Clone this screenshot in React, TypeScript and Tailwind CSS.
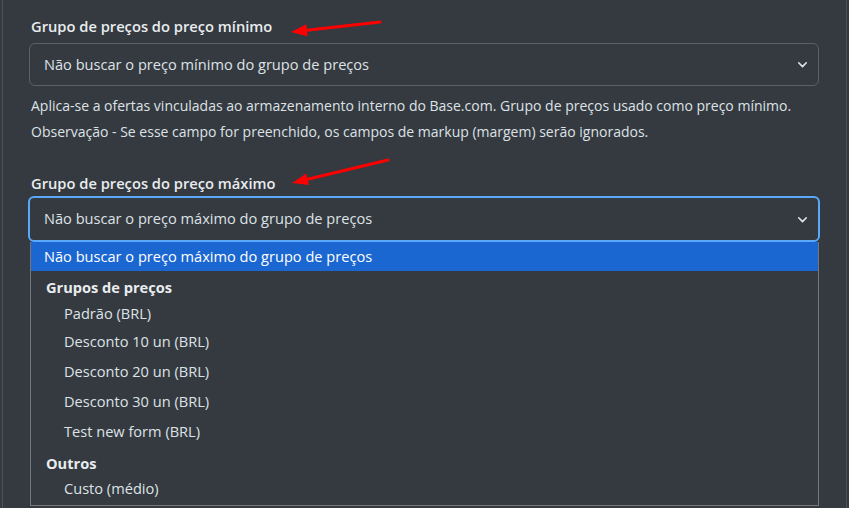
const font = { fontFamily: '"Open Sans", "Noto Sans", sans-serif' };

const groups = [
  {
    title: "Grupos de preços",
    items: [
      ["Padrão (BRL)", "h-[26px]"],
      ["Desconto 10 un (BRL)", "h-[30px]"],
      ["Desconto 20 un (BRL)", "h-[30px]"],
      ["Desconto 30 un (BRL)", "h-[30px]"],
      ["Test new form (BRL)", "h-[30px]"],
    ],
  },
  {
    title: "Outros",
    items: [["Custo (médio)", "h-[24px]"]],
  },
];

const Chevron = () => (
  <svg width="11" height="11" viewBox="0 0 16 16" className="text-[#dee2e6] mr-[2px]">
    <path
      d="M2.5 5.5l5.5 5.5 5.5-5.5"
      fill="none"
      stroke="currentColor"
      strokeWidth="2.4"
      strokeLinecap="round"
      strokeLinejoin="round"
    />
  </svg>
);

const Arrow = ({ x1, y1, x2, y2 }: { x1: number; y1: number; x2: number; y2: number }) => {
  const a = Math.atan2(y2 - y1, x2 - x1);
  const len = 16;
  const w = 6;
  const bx = x2 - len * Math.cos(a);
  const by = y2 - len * Math.sin(a);
  const px = -Math.sin(a) * w;
  const py = Math.cos(a) * w;
  return (
    <g>
      <line x1={x1} y1={y1} x2={bx} y2={by} stroke="#ff0000" strokeWidth="3" strokeLinecap="round" />
      <polygon points={`${x2},${y2} ${bx + px},${by + py} ${bx - px},${by - py}`} fill="#ff0000" />
    </g>
  );
};

const App = () => {
  return (
    <div className="relative w-[849px] h-[508px] overflow-hidden bg-[#343a40]" style={font}>
      <div className="ml-[2px] w-[845px] h-full border-x border-[#4b5157] pl-[26px] pr-[27px] pt-[15px]">
        <label className="block h-[22px] leading-[22px] text-[14.7px] font-semibold text-[#e9ecef] pl-[2px]">
          Grupo de preços do preço mínimo
        </label>
        <div className="mt-[6px] h-[43px] rounded-[6px] border border-[#5b6168] flex items-center justify-between pl-[14px] pr-[8px]">
          <span className="text-[14.6px] text-[#dee2e6]">Não buscar o preço mínimo do grupo de preços</span>
          <Chevron />
        </div>
        <p className="mt-[7px] pl-[2px] text-[14px] leading-[26px] text-[#dee2e6]">
          Aplica-se a ofertas vinculadas ao armazenamento interno do Base.com. Grupo de preços usado como preço mínimo.
          <br />
          Observação - Se esse campo for preenchido, os campos de markup (margem) serão ignorados.
        </p>
        <label className="mt-[27px] block h-[22px] leading-[22px] text-[14.7px] font-semibold text-[#e9ecef] pl-[2px]">
          Grupo de preços do preço máximo
        </label>
        <div className="mt-[2px] h-[46px] rounded-[6px] border-2 border-[#5aa9f8] -mx-[1px] flex items-center justify-between pl-[14px] pr-[8px]">
          <span className="text-[14.6px] text-[#dee2e6]">Não buscar o preço máximo do grupo de preços</span>
          <Chevron />
        </div>
        <div className="ml-[1px] w-[789px] border-x border-b border-[#767676] pb-[4px]">
          <div className="h-[29px] bg-[#1b67d2] flex items-center pl-[13px] text-[14.6px] text-white">
            Não buscar o preço máximo do grupo de preços
          </div>
          {groups.map((g) => (
            <div key={g.title}>
              <div className="h-[30px] flex items-center pl-[15px] pt-[3px] text-[14.6px] font-bold text-[#e9ecef]">
                {g.title}
              </div>
              {g.items.map(([name, h]) => (
                <div key={name} className={`${h} flex items-center pl-[33px] text-[14.6px] text-[#dee2e6]`}>
                  {name}
                </div>
              ))}
            </div>
          ))}
        </div>
      </div>
      <svg className="absolute left-0 top-0 pointer-events-none" width="849" height="508">
        <Arrow x1={380} y1={22} x2={291} y2={32} />
        <Arrow x1={388} y1={160} x2={292} y2={183} />
      </svg>
    </div>
  );
};

export default App;
